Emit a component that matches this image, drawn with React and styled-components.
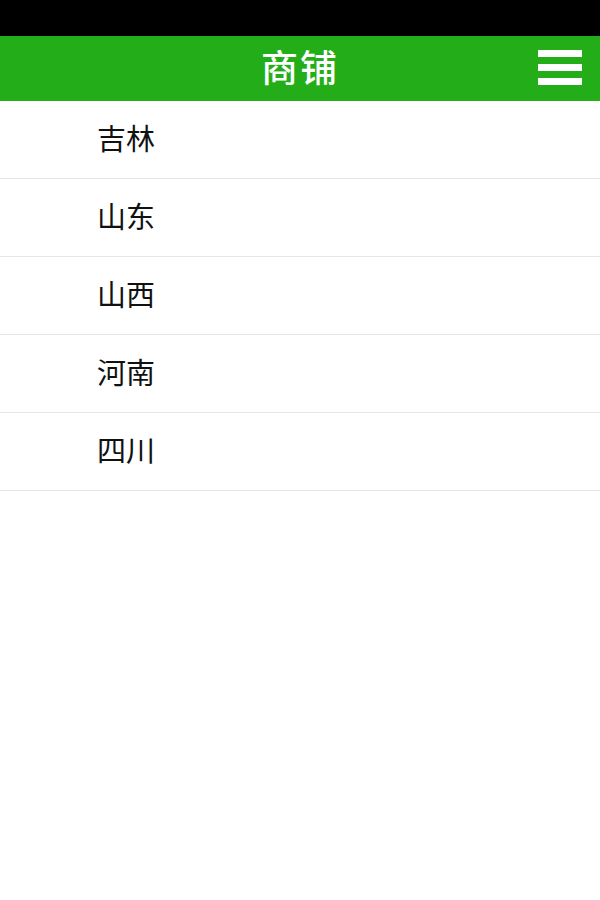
import React from "react";
import styled, { createGlobalStyle } from "styled-components";

const Global = createGlobalStyle`
  html, body { margin: 0; padding: 0; background: #fff; }
  body { font-family: "Noto Sans CJK SC", "Noto Sans", sans-serif; }
`;

const Page = styled.div`
  width: 600px;
  min-height: 900px;
  background: #fff;
  display: flex;
  flex-direction: column;
`;

const StatusBar = styled.div`
  height: 36px;
  background: #000;
`;

const Header = styled.header`
  height: 65px;
  background: #23ad19;
  display: grid;
  grid-template-columns: 1fr auto 1fr;
  align-items: center;
`;

const Title = styled.h1`
  grid-column: 2;
  margin: 0 0 4px;
  color: #fff;
  font-size: 37px;
  font-weight: 500;
  letter-spacing: 2px;
  line-height: 1;
`;

const MenuButton = styled.button`
  grid-column: 3;
  justify-self: end;
  margin-right: 18px;
  margin-bottom: 2px;
  width: 44px;
  height: 35px;
  padding: 0;
  border: none;
  background: transparent;
  display: flex;
  flex-direction: column;
  justify-content: space-between;
`;

const Bar = styled.span`
  display: block;
  height: 7px;
  width: 44px;
  background: #fff;
`;

const List = styled.ul`
  list-style: none;
  margin: 0;
  padding: 0;
`;

const Item = styled.li`
  height: 77px;
  box-sizing: border-box;
  height: 78px;
  border-bottom: 1px solid #e6e6e6;
  display: flex;
  align-items: center;
  padding: 0 0 5px 97px;
  font-size: 29px;
  color: #111;
`;

const regions = ["吉林", "山东", "山西", "河南", "四川"];

export default function App() {
  return (
    <Page>
      <Global />
      <StatusBar />
      <Header>
        <Title>商铺</Title>
        <MenuButton aria-label="menu">
          <Bar />
          <Bar />
          <Bar />
        </MenuButton>
      </Header>
      <List>
        {regions.map((r) => (
          <Item key={r}>{r}</Item>
        ))}
      </List>
    </Page>
  );
}
